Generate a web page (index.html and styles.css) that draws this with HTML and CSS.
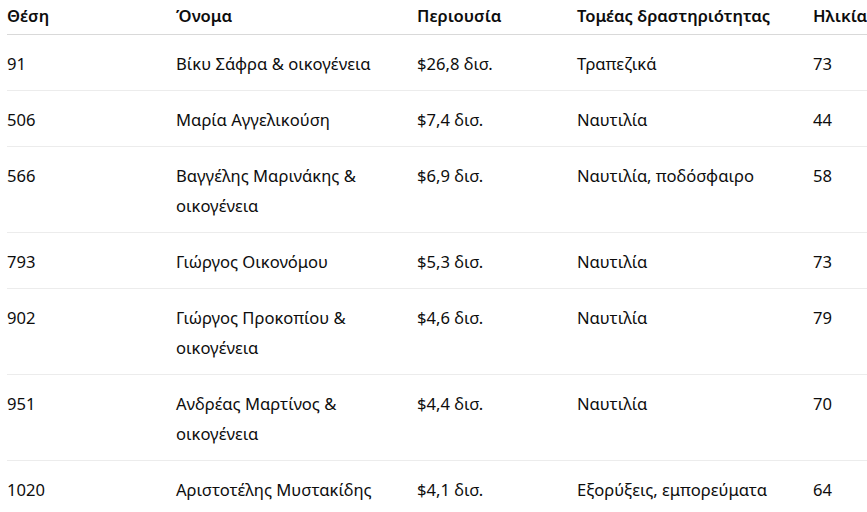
FILE: index.html
```html
<!DOCTYPE html>
<html lang="el">
<head>
<meta charset="utf-8">
<title>Πλουσιότεροι Έλληνες</title>
<link rel="stylesheet" href="styles.css">
</head>
<body>
<div class="wrap">
<table class="rich">
<colgroup>
<col class="c-rank"><col class="c-name"><col class="c-worth"><col class="c-sector"><col class="c-age">
</colgroup>
<thead>
<tr><th>Θέση</th><th>Όνομα</th><th>Περιουσία</th><th>Τομέας δραστηριότητας</th><th>Ηλικία</th></tr>
</thead>
<tbody>
<tr><td>91</td><td>Βίκυ Σάφρα &amp; οικογένεια</td><td>$26,8 δισ.</td><td>Τραπεζικά</td><td>73</td></tr>
<tr><td>506</td><td>Μαρία Αγγελικούση</td><td>$7,4 δισ.</td><td>Ναυτιλία</td><td>44</td></tr>
<tr><td>566</td><td>Βαγγέλης Μαρινάκης &amp; οικογένεια</td><td>$6,9 δισ.</td><td>Ναυτιλία, ποδόσφαιρο</td><td>58</td></tr>
<tr><td>793</td><td>Γιώργος Οικονόμου</td><td>$5,3 δισ.</td><td>Ναυτιλία</td><td>73</td></tr>
<tr><td>902</td><td>Γιώργος Προκοπίου &amp; οικογένεια</td><td>$4,6 δισ.</td><td>Ναυτιλία</td><td>79</td></tr>
<tr><td>951</td><td>Ανδρέας Μαρτίνος &amp; οικογένεια</td><td>$4,4 δισ.</td><td>Ναυτιλία</td><td>70</td></tr>
<tr><td>1020</td><td>Αριστοτέλης Μυστακίδης</td><td>$4,1 δισ.</td><td>Εξορύξεις, εμπορεύματα</td><td>64</td></tr>
</tbody>
</table>
</div>
</body>
</html>
```

FILE: styles.css
```css
html, body {
  margin: 0;
  padding: 0;
  background: #ffffff;
  overflow: hidden;
}
body {
  font-family: "Noto Sans", "Open Sans", sans-serif;
  font-size: 16.6px;
  color: #0d0d0d;
}
.wrap {
  padding-left: 7px;
}
.rich {
  border-collapse: collapse;
  table-layout: fixed;
  width: 900px;
}
.c-rank { width: 169px; }
.c-name { width: 241px; }
.c-worth { width: 160px; }
.c-sector { width: 236px; }
.c-age { width: 94px; }
.rich th {
  text-align: left;
  font-weight: 600;
  line-height: 30px;
  padding: 1px 8px 3px 0;
  border-bottom: 1px solid #d9d9d9;
  vertical-align: top;
}
.rich td {
  line-height: 30px;
  padding: 14px 8px 11px 0;
  border-bottom: 1px solid #ececec;
  vertical-align: top;
}
```
